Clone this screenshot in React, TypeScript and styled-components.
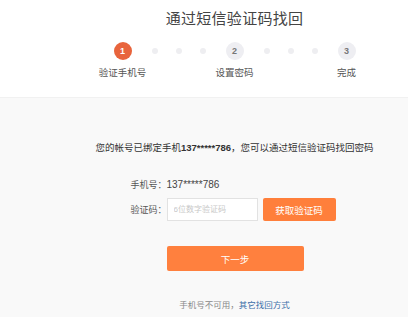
import React from 'react';
import styled, { createGlobalStyle } from 'styled-components';

const GlobalStyle = createGlobalStyle`
  html, body {
    margin: 0;
    padding: 0;
    overflow: hidden;
    background: #f9f9f9;
  }
  body {
    font-family: "Liberation Sans", "Noto Sans CJK SC", sans-serif;
    color: #333;
  }
`;

const Page = styled.div`
  width: 408px;
`;

const Header = styled.div`
  box-sizing: border-box;
  height: 98px;
  padding-left: 61px;
  background: #fff;
  border-bottom: 1px solid #f1f1f1;
  display: flex;
  flex-direction: column;
  align-items: center;
`;

const Title = styled.h1`
  margin: 8px 0 0;
  font-size: 15px;
  line-height: 21px;
  font-weight: normal;
  color: #444;
  letter-spacing: 0.3px;
`;

const Steps = styled.div`
  margin-top: 13px;
  display: flex;
  align-items: flex-start;
`;

const Step = styled.div`
  width: 18px;
  display: flex;
  flex-direction: column;
  align-items: center;
`;

const Circle = styled.div<{ $active?: boolean }>`
  width: 18px;
  height: 18px;
  border-radius: 50%;
  background: ${p => (p.$active ? '#e8643c' : '#eeeef2')};
  color: ${p => (p.$active ? '#fff' : '#777')};
  font-size: 9px;
  font-weight: bold;
  line-height: 18px;
  text-align: center;
`;

const StepLabel = styled.div`
  margin-top: 7px;
  font-size: 9.5px;
  line-height: 12px;
  white-space: nowrap;
  color: #555;
`;

const Dots = styled.div`
  height: 18px;
  margin: 0 20px;
  display: flex;
  align-items: center;
  gap: 18px;
`;

const Dot = styled.span`
  width: 6px;
  height: 6px;
  border-radius: 50%;
  background: #eeeef1;
`;

const Main = styled.div`
  box-sizing: border-box;
  padding-left: 61px;
  display: flex;
  flex-direction: column;
  align-items: center;
`;

const Notice = styled.p`
  margin: 44px 0 0;
  font-size: 9.5px;
  line-height: 12px;
  white-space: nowrap;
  color: #333;
  b {
    font-weight: bold;
  }
`;

const Form = styled.div`
  margin: 24px 3px 0 0;
  display: flex;
  flex-direction: column;
`;

const Row = styled.div`
  display: flex;
  align-items: center;
  margin-bottom: 7px;
`;

const Label = styled.span`
  width: 36px;
  font-size: 9px;
  color: #555;
  white-space: nowrap;
`;

const Value = styled.span`
  font-size: 10px;
  color: #444;
`;

const Input = styled.input`
  box-sizing: border-box;
  width: 91px;
  height: 23px;
  border: 1px solid #e2e2e2;
  background: #fff;
  padding: 0 6px;
  font-family: inherit;
  font-size: 8px;
  outline: none;
  &::placeholder {
    color: #c8c8c8;
  }
`;

const CodeButton = styled.button`
  margin-left: 5px;
  width: 73px;
  height: 23px;
  border: none;
  border-radius: 2px;
  background: #ff7f3b;
  color: #fff;
  font-family: inherit;
  font-size: 9.5px;
  padding: 0;
`;

const NextButton = styled.button`
  margin: 18px 0 0 36px;
  width: 137px;
  height: 25px;
  border: none;
  border-radius: 2px;
  background: #ff803e;
  color: #fff;
  font-family: inherit;
  font-size: 9.5px;
  padding: 0;
`;

const Footer = styled.p`
  margin: 27px 0 0;
  font-size: 8.5px;
  color: #888;
  a {
    color: #3a6ea8;
    text-decoration: none;
  }
`;

const steps = ['验证手机号', '设置密码', '完成'];

export default function App() {
  return (
    <Page>
      <GlobalStyle />
      <Header>
        <Title>通过短信验证码找回</Title>
        <Steps>
          {steps.map((label, i) => (
            <React.Fragment key={label}>
              {i > 0 && (
                <Dots>
                  <Dot />
                  <Dot />
                  <Dot />
                </Dots>
              )}
              <Step>
                <Circle $active={i === 0}>{i + 1}</Circle>
                <StepLabel>{label}</StepLabel>
              </Step>
            </React.Fragment>
          ))}
        </Steps>
      </Header>
      <Main>
        <Notice>
          您的帐号已绑定手机<b>137*****786</b>，您可以通过短信验证码找回密码
        </Notice>
        <Form>
          <Row>
            <Label>手机号：</Label>
            <Value>137*****786</Value>
          </Row>
          <Row>
            <Label>验证码：</Label>
            <Input placeholder="6位数字验证码" />
            <CodeButton>获取验证码</CodeButton>
          </Row>
          <NextButton>下一步</NextButton>
        </Form>
        <Footer>
          手机号不可用，<a href="#">其它找回方式</a>
        </Footer>
      </Main>
    </Page>
  );
}
